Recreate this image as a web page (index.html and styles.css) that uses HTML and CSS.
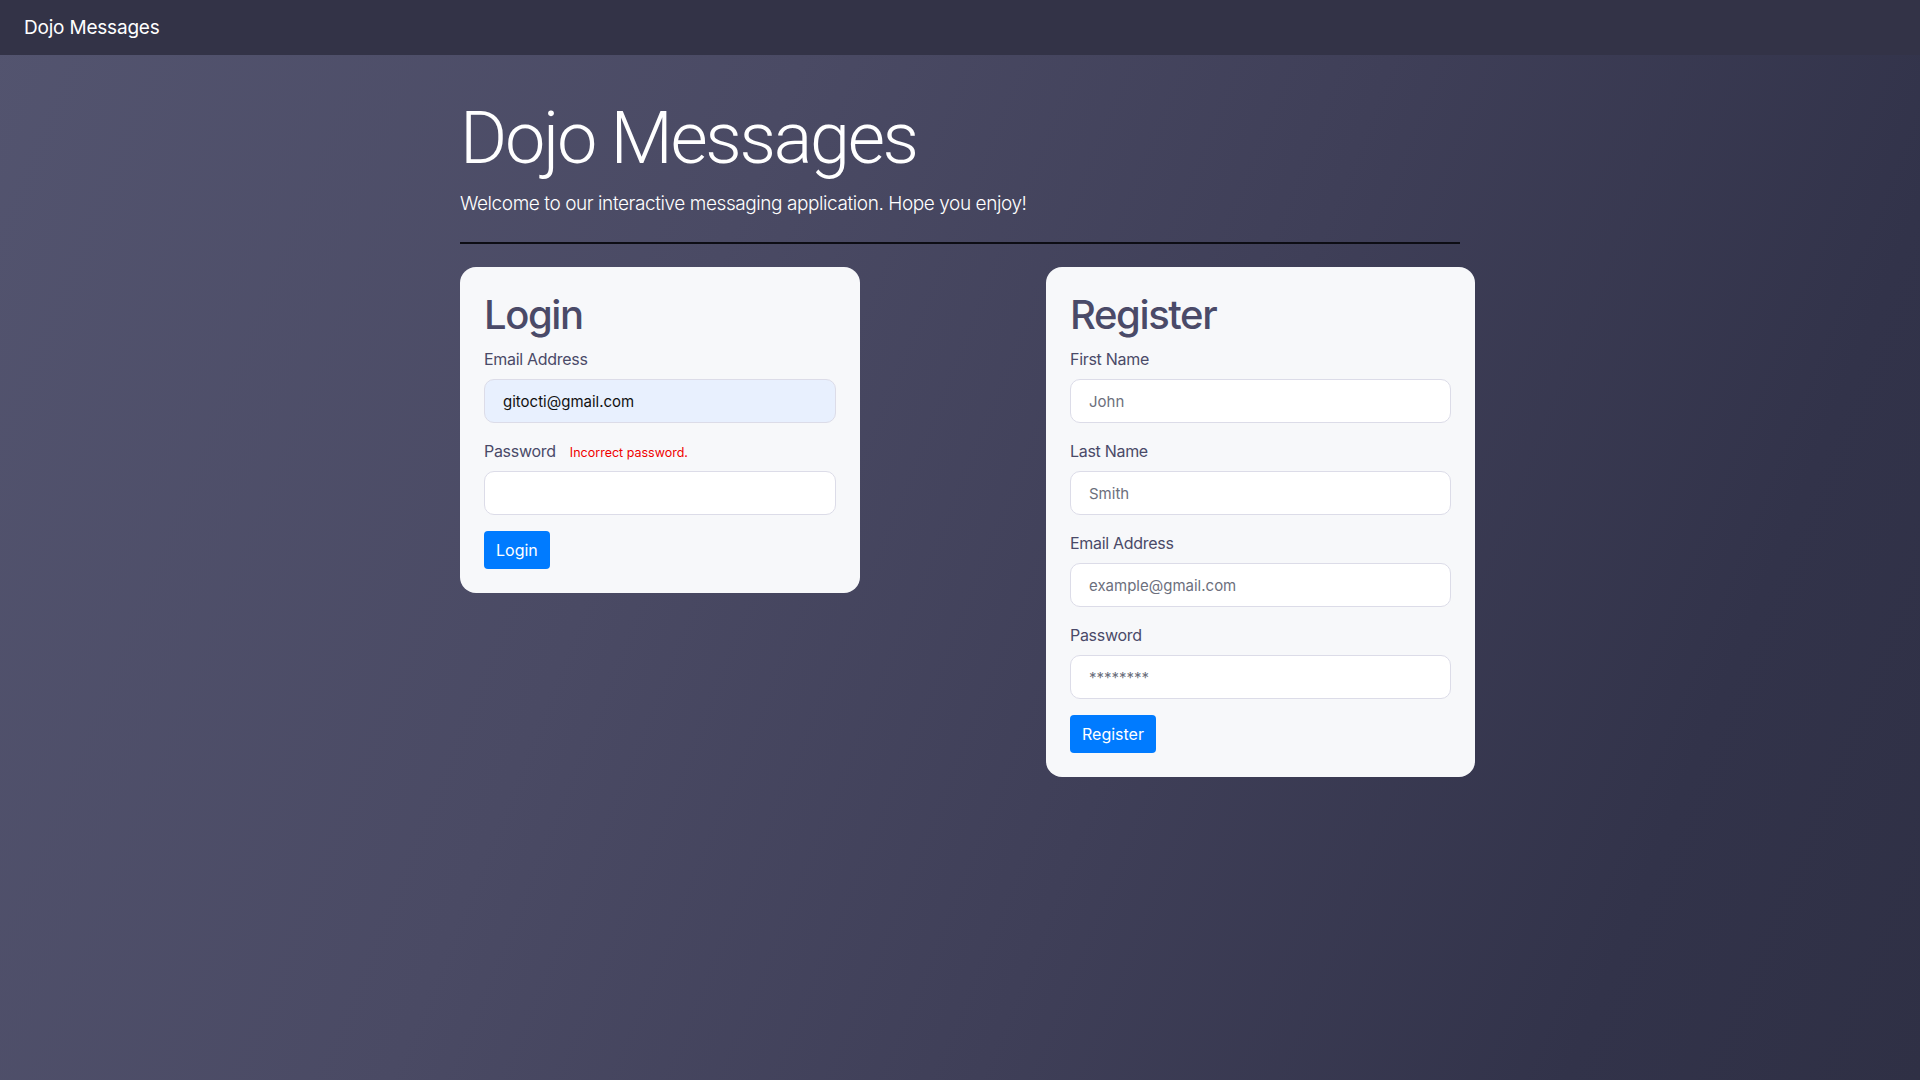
FILE: index.html
```html
<!DOCTYPE html>
<html lang="en">
<head>
<meta charset="utf-8">
<title>Dojo Messages</title>
<link rel="stylesheet" href="styles.css">
</head>
<body>
<nav class="navbar"><span class="brand">Dojo Messages</span></nav>
<main class="container">
  <header class="jumbo">
    <h1 class="display">Dojo Messages</h1>
    <p class="lead">Welcome to our interactive messaging application. Hope you enjoy!</p>
    <hr class="divider">
  </header>
  <div class="cards">
    <form class="card card-login">
      <h2 class="card-title">Login</h2>
      <div class="group">
        <label class="label">Email Address</label>
        <input class="field field-filled" type="text" value="gitocti@gmail.com">
      </div>
      <div class="group">
        <label class="label">Password <span class="error">Incorrect password.</span></label>
        <input class="field" type="password">
      </div>
      <button type="button" class="btn">Login</button>
    </form>
    <form class="card card-register">
      <h2 class="card-title">Register</h2>
      <div class="group">
        <label class="label">First Name</label>
        <input class="field" type="text" placeholder="John">
      </div>
      <div class="group">
        <label class="label">Last Name</label>
        <input class="field" type="text" placeholder="Smith">
      </div>
      <div class="group">
        <label class="label">Email Address</label>
        <input class="field" type="text" placeholder="example@gmail.com">
      </div>
      <div class="group">
        <label class="label">Password</label>
        <input class="field" type="password" placeholder="********">
      </div>
      <button type="button" class="btn">Register</button>
    </form>
  </div>
</main>
</body>
</html>
```

FILE: styles.css
```css
* { box-sizing: border-box; }
html, body { height: 100%; }
body {
  margin: 0;
  min-height: 1080px;
  font-family: Inter, "Noto Sans", sans-serif;
  color: #fff;
  background: linear-gradient(112deg, #53546f 0%, #4a4a64 35%, #3f3f58 60%, #32334a 85%, #2f3045 100%);
}
.navbar {
  height: 55px;
  display: flex;
  align-items: center;
  padding: 0 24px;
  background: #333347;
}
.brand {
  font-size: 19px;
  letter-spacing: -0.2px;
  color: #fff;
}
.container {
  width: 1015px;
  margin: 0 0 0 460px;
}
.jumbo { padding-top: 41px; }
.display {
  margin: 0;
  font-family: Roboto, Inter, sans-serif;
  font-size: 72px;
  font-weight: 300;
  line-height: 86px;
  letter-spacing: -2.3px;
}
.lead {
  margin: 8px 0 0;
  font-size: 19px;
  font-weight: 300;
  letter-spacing: -0.42px;
  line-height: 28px;
}
.divider {
  width: 1000px;
  margin: 24px 0 23px;
  border: 0;
  border-top: 2px solid #0d0d14;
}
.cards {
  display: flex;
  justify-content: space-between;
  align-items: flex-start;
}
.card {
  background: #f7f8fa;
  border-radius: 16px;
  padding: 24px;
  color: #4a4a68;
}
.card-login { width: 400px; }
.card-register { width: 429px; }
.card-title {
  margin: 0 0 8px;
  font-size: 40px;
  font-weight: 500;
  line-height: 48px;
  letter-spacing: -1.4px;
  color: #4a4a68;
}
.group { margin-bottom: 16px; }
.label {
  display: block;
  margin-bottom: 8px;
  font-size: 16px;
  line-height: 24px;
  color: #4a4a68;
  letter-spacing: -0.3px;
}
.error {
  margin-left: 10px;
  font-size: 12.5px;
  line-height: 1;
  color: #f00000;
  letter-spacing: 0;
}
.field {
  display: block;
  width: 100%;
  height: 44px;
  padding: 0 18px;
  border: 1px solid #dcdce8;
  border-radius: 10px;
  background: #fff;
  font-family: inherit;
  font-size: 15px;
  color: #111;
  outline: none;
}
.field::placeholder { color: #6c6f7d; }
.field-filled { background: #e8f0fe; }
.btn {
  display: block;
  height: 38px;
  padding: 0 12px;
  border: 0;
  border-radius: 4px;
  background: #007bff;
  color: #fff;
  font-family: inherit;
  font-size: 16px;
  cursor: pointer;
}
```
